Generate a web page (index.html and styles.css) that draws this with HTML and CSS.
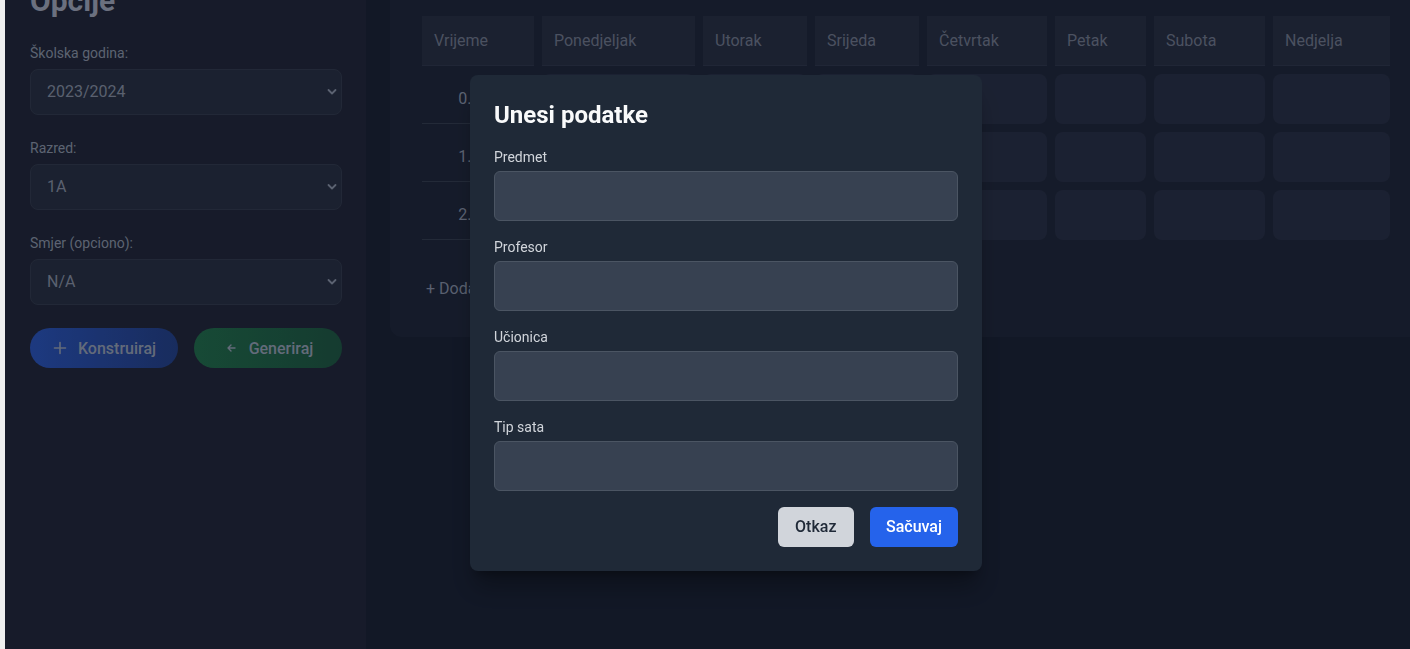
FILE: index.html
```html
<!DOCTYPE html>
<html lang="hr">
<head>
<meta charset="utf-8">
<title>Raspored sati</title>
<link rel="stylesheet" href="styles.css">
</head>
<body>
<div class="app">
  <div class="strip"></div>
  <aside class="sidebar">
    <h2 class="side-title">Opcije</h2>
    <div class="field">
      <label class="side-label">Školska godina:</label>
      <div class="select"><span>2023/2024</span><svg class="chev" width="10" height="10" viewBox="0 0 10 10"><path d="M1.5 3 L5 6.5 L8.5 3" fill="none" stroke="currentColor" stroke-width="1.8" stroke-linecap="round" stroke-linejoin="round"/></svg></div>
    </div>
    <div class="field">
      <label class="side-label">Razred:</label>
      <div class="select"><span>1A</span><svg class="chev" width="10" height="10" viewBox="0 0 10 10"><path d="M1.5 3 L5 6.5 L8.5 3" fill="none" stroke="currentColor" stroke-width="1.8" stroke-linecap="round" stroke-linejoin="round"/></svg></div>
    </div>
    <div class="field">
      <label class="side-label">Smjer (opciono):</label>
      <div class="select"><span>N/A</span><svg class="chev" width="10" height="10" viewBox="0 0 10 10"><path d="M1.5 3 L5 6.5 L8.5 3" fill="none" stroke="currentColor" stroke-width="1.8" stroke-linecap="round" stroke-linejoin="round"/></svg></div>
    </div>
    <div class="actions">
      <button class="pill pill-blue"><svg width="16" height="16" viewBox="0 0 16 16"><path d="M8 2.5 V13.5 M2.5 8 H13.5" fill="none" stroke="currentColor" stroke-width="1.6" stroke-linecap="round"/></svg><span>Konstruiraj</span></button>
      <button class="pill pill-green"><svg width="16" height="16" viewBox="0 0 16 16"><path d="M12 8 H5 M8 5 L5 8 L8 11" fill="none" stroke="currentColor" stroke-width="1.4" stroke-linecap="round" stroke-linejoin="round"/></svg><span>Generiraj</span></button>
    </div>
  </aside>
  <main class="main">
    <section class="card">
      <table class="grid">
        <colgroup>
          <col class="c-time"><col class="c-mon"><col class="c-tue"><col class="c-wed"><col class="c-thu"><col class="c-fri"><col class="c-sat"><col class="c-sun">
        </colgroup>
        <thead>
          <tr><th>Vrijeme</th><th>Ponedjeljak</th><th>Utorak</th><th>Srijeda</th><th>Četvrtak</th><th>Petak</th><th>Subota</th><th>Nedjelja</th></tr>
        </thead>
        <tbody>
          <tr><td class="time">0. sat</td><td class="slot"></td><td class="slot"></td><td class="slot"></td><td class="slot"></td><td class="slot"></td><td class="slot"></td><td class="slot"></td></tr>
          <tr><td class="time">1. sat</td><td class="slot"></td><td class="slot"></td><td class="slot"></td><td class="slot"></td><td class="slot"></td><td class="slot"></td><td class="slot"></td></tr>
          <tr><td class="time">2. sat</td><td class="slot"></td><td class="slot"></td><td class="slot"></td><td class="slot"></td><td class="slot"></td><td class="slot"></td><td class="slot"></td></tr>
        </tbody>
      </table>
      <button class="add-row">+ Dodaj red</button>
    </section>
  </main>
</div>

<div class="overlay">
  <div class="modal">
    <h3 class="modal-title">Unesi podatke</h3>
    <div class="m-field">
      <label class="m-label">Predmet</label>
      <input class="m-input" type="text">
    </div>
    <div class="m-field">
      <label class="m-label">Profesor</label>
      <input class="m-input" type="text">
    </div>
    <div class="m-field">
      <label class="m-label">Učionica</label>
      <input class="m-input" type="text">
    </div>
    <div class="m-field">
      <label class="m-label">Tip sata</label>
      <input class="m-input" type="text">
    </div>
    <div class="m-actions">
      <button class="btn btn-cancel">Otkaz</button>
      <button class="btn btn-save">Sačuvaj</button>
    </div>
  </div>
</div>
</body>
</html>
```

FILE: styles.css
```css
* { box-sizing: border-box; }

html, body {
  margin: 0;
  height: 100%;
  overflow: hidden;
}

body {
  background: #182033;
  font-family: Roboto, "Liberation Sans", Arial, sans-serif;
  font-size: 16px;
  line-height: 24px;
}

.app {
  display: flex;
  margin-top: -41px;
  min-height: calc(100vh + 41px);
}

.strip {
  width: 5px;
  flex-shrink: 0;
  background: #efefef;
}

/* ---------- sidebar ---------- */
.sidebar {
  width: 361px;
  flex-shrink: 0;
  background: #1f2538;
  padding: 24px 24px 24px 25px;
}

.side-title {
  margin: 0 0 24px;
  font-size: 30px;
  line-height: 36px;
  font-weight: 700;
  color: #8f96aa;
}

.field {
  margin-bottom: 23px;
}

.side-label {
  display: block;
  font-size: 14px;
  line-height: 20px;
  color: #7c8598;
  margin-bottom: 6px;
}

.select {
  height: 46px;
  display: flex;
  align-items: center;
  justify-content: space-between;
  padding: 0 4px 0 16px;
  background: #252d40;
  border: 1px solid #2e364a;
  border-radius: 8px;
  color: #788195;
  font-size: 16px;
}

.chev { color: #7a8397; }

.actions {
  display: flex;
  gap: 16px;
  margin-top: 2px;
}

.pill {
  flex: 1;
  height: 40px;
  border: none;
  border-radius: 9999px;
  display: flex;
  align-items: center;
  justify-content: center;
  gap: 10px;
  font-family: inherit;
  font-size: 16px;
  font-weight: 500;
  color: #858fa3;
  padding: 0 12px;
}

.pill-blue { background: linear-gradient(to right, #274dab, #213b7d); }
.pill-green { background: linear-gradient(to right, #1f6348, #1c4f40); }

/* ---------- main ---------- */
.main {
  flex: 1;
  min-width: 0;
  overflow: hidden;
  padding: 25px 24px;
  background: #182033;
}

.card {
  width: max-content;
  background: #1d2539;
  border-radius: 12px;
  padding: 24px;
}

.grid {
  border-collapse: separate;
  border-spacing: 8px;
  table-layout: fixed;
  width: 984px;
}

.c-time { width: 112px; }
.c-mon { width: 153px; }
.c-tue { width: 104px; }
.c-wed { width: 104px; }
.c-thu { width: 120px; }
.c-fri { width: 91px; }
.c-sat { width: 111px; }
.c-sun { width: 117px; }

.grid th {
  height: 50px;
  padding: 0 12px;
  text-align: left;
  font-weight: 400;
  color: #646d81;
  background: #242c40;
  border-bottom: 1px solid #2b3348;
  vertical-align: middle;
}

.grid td {
  height: 50px;
  padding: 0;
}

.time {
  text-align: center;
  color: #7b8499;
  border-bottom: 1px solid #2f384b;
  white-space: nowrap;
}

.slot {
  background: #252d43;
  border-radius: 8px;
}

.add-row {
  margin-top: 17px;
  padding: 12px;
  background: none;
  border: none;
  font-family: inherit;
  font-size: 16px;
  line-height: 24px;
  color: #778095;
}

/* ---------- modal ---------- */
.overlay {
  position: fixed;
  top: 0;
  right: 0;
  bottom: 0;
  left: 5px;
  background: rgba(0, 0, 0, 0.25);
  display: flex;
  align-items: flex-start;
  padding: 75px 0 0 465px;
}

.modal {
  width: 512px;
  background: #1f2937;
  border-radius: 8px;
  padding: 24px;
  box-shadow: 0 20px 25px -5px rgba(0,0,0,0.3), 0 8px 10px -6px rgba(0,0,0,0.3);
}

.modal-title {
  margin: 0 0 16px;
  font-size: 24px;
  line-height: 32px;
  font-weight: 700;
  color: #f9fafb;
}

.m-field { margin-bottom: 16px; }

.m-label {
  display: block;
  font-size: 14px;
  line-height: 20px;
  color: #d1d5db;
  margin-bottom: 4px;
}

.m-input {
  display: block;
  width: 100%;
  height: 50px;
  padding: 12px 16px;
  background: #374151;
  border: 1px solid #4b5563;
  border-radius: 6px;
  color: #f3f4f6;
  font-family: inherit;
  font-size: 16px;
  outline: none;
}

.m-actions {
  display: flex;
  justify-content: flex-end;
  gap: 16px;
}

.btn {
  height: 40px;
  padding: 8px 16px;
  border: none;
  border-radius: 6px;
  font-family: inherit;
  font-size: 16px;
  line-height: 24px;
  font-weight: 500;
}

.btn-cancel { background: #d1d5db; color: #1f2937; padding: 8px 17.5px; }
.btn-save { background: #2563eb; color: #ffffff; }
```
